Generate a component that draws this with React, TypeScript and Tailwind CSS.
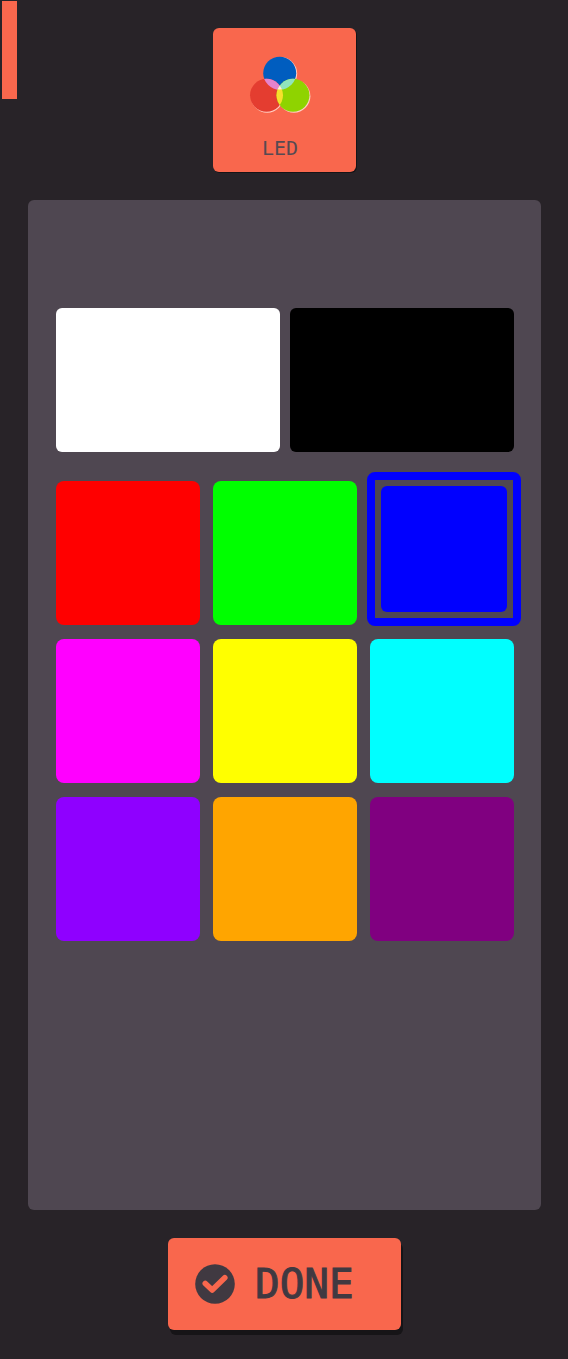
import { useState } from "react";

const wide = [
  { name: "White", fill: "bg-white" },
  { name: "Black", fill: "bg-black" },
];

const swatches = [
  { name: "Red", fill: "bg-[#ff0000]", ring: "border-[#ff0000]" },
  { name: "Green", fill: "bg-[#00ff00]", ring: "border-[#00ff00]" },
  { name: "Blue", fill: "bg-[#0000ff]", ring: "border-[#0000ff]" },
  { name: "Magenta", fill: "bg-[#ff00ff]", ring: "border-[#ff00ff]" },
  { name: "Yellow", fill: "bg-[#ffff00]", ring: "border-[#ffff00]" },
  { name: "Cyan", fill: "bg-[#00ffff]", ring: "border-[#00ffff]" },
  { name: "Violet", fill: "bg-[#8f00ff]", ring: "border-[#8f00ff]" },
  { name: "Orange", fill: "bg-[#ffa500]", ring: "border-[#ffa500]" },
  { name: "Purple", fill: "bg-[#800080]", ring: "border-[#800080]" },
];

function LedIcon() {
  return (
    <svg width="62" height="58" viewBox="0 0 62 58" aria-hidden="true">
      <defs>
        <clipPath id="blue"><circle cx="30.7" cy="17.2" r="16.5" /></clipPath>
        <clipPath id="red"><circle cx="17.5" cy="39.3" r="16.5" /></clipPath>
        <clipPath id="green"><circle cx="44" cy="39.3" r="16.5" /></clipPath>
      </defs>
      <g fill="#ffd0c4">
        <circle cx="31.7" cy="17.6" r="16.5" />
        <circle cx="18.2" cy="40.2" r="16.5" />
        <circle cx="44.9" cy="40.2" r="16.5" />
      </g>
      <circle cx="30.7" cy="17.2" r="16.5" fill="#005dbf" />
      <circle cx="17.5" cy="39.3" r="16.5" fill="#e43d30" />
      <circle cx="44" cy="39.3" r="16.5" fill="#8fd300" />
      <circle cx="30.7" cy="17.2" r="16.5" fill="#e583cd" clipPath="url(#red)" />
      <circle cx="30.7" cy="17.2" r="16.5" fill="#91e4bd" clipPath="url(#green)" />
      <circle cx="17.5" cy="39.3" r="16.5" fill="#f7e02c" clipPath="url(#green)" />
      <g clipPath="url(#red)">
        <g clipPath="url(#green)">
          <circle cx="30.7" cy="17.2" r="16.5" fill="#fbeee4" clipPath="url(#blue)" />
        </g>
      </g>
    </svg>
  );
}

function CheckIcon() {
  return (
    <svg width="40" height="40" viewBox="0 0 40 40" aria-hidden="true">
      <circle cx="20" cy="20" r="19.8" fill="#403941" />
      <path
        d="M10.3 19.4L17.2 26L29.8 13.7"
        fill="none"
        stroke="#f9674d"
        strokeWidth="5.6"
        strokeLinecap="round"
        strokeLinejoin="round"
      />
    </svg>
  );
}

export default function App() {
  const [selected, setSelected] = useState("Blue");

  return (
    <div className="relative flex min-h-screen flex-col items-center bg-[#282328] pt-7 pr-[27px] pb-[29px] pl-7 font-['DejaVu_Sans_Mono',monospace]">
      <div className="absolute top-px left-0.5 h-[98px] w-[15px] bg-[#f9674d]" />

      <header className="flex h-36 w-[143px] flex-col items-center rounded-md bg-[#f9674d] pt-7 pr-[9px] shadow-[1px_1px_0_#171417]">
        <LedIcon />
        <h1 className="mt-[22px] text-[20px] leading-6 text-[#574a52]">LED</h1>
      </header>

      <main className="mt-7 w-full flex-1 rounded-md bg-[#4f4751] pt-27 pr-[27px] pb-7 pl-7">
        <div className="grid grid-cols-2 gap-2.5">
          {wide.map((c) => (
            <button
              key={c.name}
              type="button"
              aria-label={c.name}
              onClick={() => setSelected(c.name)}
              className={`h-36 rounded-md ${c.fill}`}
            />
          ))}
        </div>
        <div className="mt-[29px] grid grid-cols-3 gap-x-[13px] gap-y-3.5">
          {swatches.map((c) => (
            <div key={c.name} className="flex aspect-square">
              {selected === c.name ? (
                <button
                  type="button"
                  aria-label={c.name}
                  aria-pressed="true"
                  className={`-mt-[9px] -mr-[7px] -mb-px -ml-[3px] flex flex-1 rounded-lg border-8 p-1.5 ${c.ring}`}
                >
                  <span className={`flex-1 self-stretch rounded-md ${c.fill}`} />
                </button>
              ) : (
                <button
                  type="button"
                  aria-label={c.name}
                  onClick={() => setSelected(c.name)}
                  className={`flex-1 rounded-lg ${c.fill}`}
                />
              )}
            </div>
          ))}
        </div>
      </main>

      <button
        type="button"
        className="mt-7 flex h-23 w-[233px] items-center gap-5 rounded-md bg-[#f9674d] pl-[27px] text-[41px] leading-none text-[#403941] shadow-[2px_5px_0_#161417] [-webkit-text-stroke:1px_#403941]"
      >
        <CheckIcon />
        DONE
      </button>
    </div>
  );
}
